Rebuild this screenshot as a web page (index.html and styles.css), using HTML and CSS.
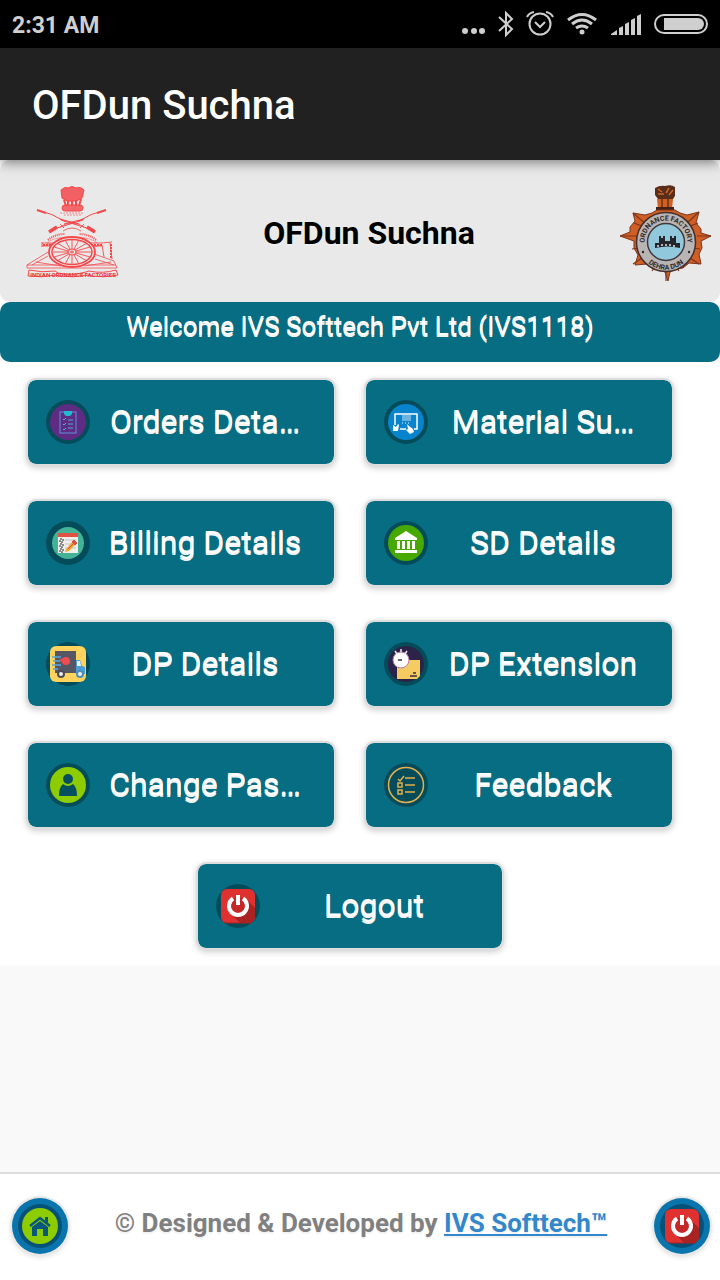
FILE: index.html
```html
<!DOCTYPE html>
<html lang="en">
<head>
    <meta charset="utf-8">
    <meta name="viewport" content="width=device-width, initial-scale=1">
    <title>OFDun Suchna</title>
    <link rel="stylesheet" href="styles.css">
</head>
<body>
    <!-- shared icons -->
    <svg class="defs" width="0" height="0" aria-hidden="true">
        <symbol id="power" viewBox="0 0 44 44">
            <rect x="5" y="5" width="34" height="34" rx="6" fill="#e03131"/>
            <path d="M29 14L39 24V33a6 6 0 0 1-6 6H24L15 30Z" fill="#a92323"/>
            <path d="M8 39h27" stroke="#a92323" stroke-width="1"/>
            <circle cx="22" cy="22" r="9" fill="#c52828"/>
            <path d="M17 14.500a9 9 0 1 0 10 0" fill="none" stroke="#fff" stroke-width="4"/>
            <path d="M22 11v10" stroke="#fff" stroke-width="4"/>
        </symbol>
    </svg>

    <div class="status-bar">
        <span>2:31 AM</span>
        <div class="status-icons">
            <svg width="24" height="48" viewBox="0 0 24 48" fill="#cfcfcf"><circle cx="3" cy="31" r="3"/><circle cx="12" cy="31" r="3"/><circle cx="20" cy="31" r="3"/></svg>
            <svg width="16" height="48" viewBox="0 0 16 48" fill="none" stroke="#cfcfcf" stroke-width="2"><path d="M1 17l13 12-6 6V13l6 6L1 31"/></svg>
            <svg width="28" height="48" viewBox="0 0 28 48" fill="none" stroke="#cfcfcf" stroke-width="2"><circle cx="14" cy="24" r="10.500"/><path d="M9 22l5 5 5-5"/><path d="M1 17q2-4 7-5M27 17q-2-4-7-5"/></svg>
            <svg width="32" height="48" viewBox="0 0 32 48" fill="none" stroke="#cfcfcf" stroke-width="3"><path d="M2 20q14-11 28 0M6 24q10-8 20 0M10 28q6-4 12 0"/><circle cx="16" cy="32" r="2.500" fill="#cfcfcf" stroke="none"/></svg>
            <svg width="32" height="48" viewBox="0 0 32 48" fill="#cfcfcf"><path d="M1 35v-1l6-4v5zM9 35v-7l4-2v9zM15 35v-11l4-2v13zM21 35v-15l4-2v17zM27 35V16l4-2v21z"/></svg>
            <svg width="54" height="48" viewBox="0 0 54 48"><rect x="1" y="15" width="52" height="18" rx="9" fill="none" stroke="#cfcfcf" stroke-width="2"/><path d="M10 18h34a6 6 0 0 1 0 12H10z" fill="#cfcfcf"/></svg>
        </div>
    </div>

    <div class="app-bar">OFDun Suchna</div>

    <header>
        <svg class="logo" viewBox="0 0 96 96" fill="none" stroke="#f5484b" role="img" aria-label="Indian Ordnance Factories">
            <path d="M37 5q4-4 7-2 4-3 8 0 5-2 8 2l-2 8q-5 4-10 3-6 1-10-3z" fill="#f5484b" fill-opacity=".85"/>
            <path d="M40 15l2 6M44 15v6M48 16v5M52 15v6M57 14l-2 7" stroke-width="2"/>
            <rect x="38" y="20" width="21" height="6" rx="3" fill="#f5484b" fill-opacity=".8"/>
            <path d="M36 28h24M40 30h17" stroke-width=".6" stroke-dasharray="2 1"/>
            <path d="M13 25q15 3 29 12M82 25q-15 3-29 12" stroke-width="1"/>
            <path d="M13 25l9 3M82 25l-9 3" stroke-width="2"/>
            <path d="M37 35l26 8M59 35l-26 8M40 39l20-5M36 34l19 5" stroke-width="1"/>
            <path d="M33 42l-8 5M63 42l8 5" stroke-width="3.500"/>
            <path d="M36 42q12-8 24 0M39 46q9-6 18 0M36 39l4 4M60 39l-4 4" stroke-width=".8"/>
            <path d="M24 55q7-6 17-6M72 55q-7-6-17-6" stroke-width="2" stroke-dasharray="1 1"/>
            <path d="M23 58q5-5 19-6M73 58q-5-5-19-6" stroke-width=".5"/>
            <path d="M18 58h60l10-1M18 61h60M18 57v5M86 58l2 16M23 59l50 2M78 60l2 12" stroke-width=".9"/>
            <path d="M19 60h17M61 60h17M87 59v14" stroke-width="2" stroke-dasharray="2 1"/>
            <ellipse cx="48" cy="67" rx="23" ry="15" fill="#e9e9e9" stroke-width="1.800"/>
            <ellipse cx="48" cy="67" rx="20" ry="12.500" stroke-width="1.500"/>
            <ellipse cx="48" cy="67" rx="4" ry="3"/>
            <ellipse cx="48" cy="67" rx="1.500" ry="1"/>
            <path d="M52 67h15M44 67H29M48 64V55M48 70v9M51 65l12-7M45 65l-12-7M51 69l12 7M45 69l-12 7M50 64l5-9M46 64l-5-9M50 70l5 9M46 70l-5 9M52 66l14-4M44 66l-14-4M52 68l14 4M44 68l-14 4" stroke-width=".9"/>
            <path d="M24 67L3 80v3h90l-3-7-20-7M3 80h30M64 80h28M24 71L8 80M71 74l19 6M12 77l25 4M60 81l27-4" stroke-width=".8"/>
            <path d="M5 85q13 3 26 1l3 2q14 3 28-1l3-1q14 3 27-1l2 5q-14 3-28 1l-3-1q-14 3-28 1l-3-1q-14 3-28 1z" stroke-width="1"/>
            <text class="ribbon" x="49" y="92" text-anchor="middle" stroke="none" fill="#e8383c">INDIAN ORDNANCE FACTORIES</text>
        </svg>
        <h1>OFDun Suchna</h1>
        <svg class="logo" viewBox="0 0 96 96" role="img" aria-label="Ordnance Factory Dehra Dun">
            <path d="M37 3q5-3 10-2 6-2 10 1v9l-2 3H40l-3-4z" fill="#5a2d1a"/>
            <path d="M40 4l4 3M51 3l-3 5M55 5l-4 5M40 9h6" stroke="#c9652d" stroke-width="1.500"/>
            <path d="M39 14h16l-1 10H40z" fill="#d2601f"/>
            <path d="M44 14v8M50 14v8" stroke="#69301a" stroke-width="1.500"/>
            <path d="M38 22h18v6H38z" fill="#452015"/>
            <path d="M15 28l12 2 7-2 5-3h18l5 3 7 2 12-3-3 11 5 6v4l10 3-10 5 1 7-3 6 2 10-12-1-6 5-8 1-5 3-2 9-3-9-6-3-7-1-5-4-12 1 3-10-4-7v-7L2 51l10-4v-5l5-6z" fill="#cf5f25" stroke="#7c351c" stroke-width="1"/>
            <path d="M15 28l14 12M81 27L68 39M2 51h16M93 51H79M15 79l12-8M81 79L69 71M48 97V86M16 38l10 4M80 38l-10 4M14 64l8-1M82 64l-7-1M34 86l4-6M61 86l-4-6" stroke="#7c351c" stroke-width="1.200"/>
            <circle cx="48" cy="57" r="29.500" fill="#b9b5b4" stroke="#45302d" stroke-width="1.500"/>
            <circle cx="48" cy="57" r="18.500" fill="#91c8dc" stroke="#41383b" stroke-width="1.500"/>
            <path id="ringTop" d="M28 64.500a21.400 21.400 0 1 1 40 0" fill="none"/>
            <path id="ringBottom" d="M22 65a27 27 0 0 0 52 0" fill="none"/>
            <text class="ring" text-anchor="middle"><textPath href="#ringTop" startOffset="50%">ORDNANCE FACTORY</textPath></text>
            <text class="ring" text-anchor="middle"><textPath href="#ringBottom" startOffset="50%">DEHRA DUN</textPath></text>
            <circle cx="25" cy="67" r="1.200" fill="#2e2829"/><circle cx="71" cy="67" r="1.200" fill="#2e2829"/>
            <path d="M37 63v-5h4v-7h2v2h2v-2h2v5h5v-5h2v2h2v-2h2v7h4v5q-12-3-25 0z" fill="#25262b"/>
            <path d="M40 60v2M44 59v2M48 59v2M52 59v2M56 60v2" stroke="#d8e4e8" stroke-width="1.500"/>
        </svg>
    </header>

    <div class="welcome">Welcome IVS Softtech Pvt Ltd (IVS1118)</div>

    <main>
        <div class="menu">
            <button class="tile">
                <svg class="icon" viewBox="0 0 44 44" aria-hidden="true"><circle cx="22" cy="22" r="18" fill="#5f2c84"/><rect x="14" y="12" width="16" height="21" fill="none" stroke="#5b91d8"/><path d="M18 11h8v3l-2 2h-4l-2-2z" fill="#22bad0"/><path d="M17 19l1 1 2-2M17 24l1 1 2-2M17 29l1 1 2-2M22 20h5M22 24h5M22 28h5" fill="none" stroke="#4bafe0"/></svg>
                <span>Orders Deta…</span>
            </button>
            <button class="tile">
                <svg class="icon" viewBox="0 0 44 44" aria-hidden="true"><circle cx="22" cy="22" r="18" fill="#0784cc"/><path d="M11 25V14h22v15h-3M16 29h6" fill="none" stroke="#fff" stroke-width="1.500"/><path d="M18 16h9M18 18h9M18 20h9" stroke="#fff" stroke-width=".8"/><path d="M18 23h8" stroke="#fff" stroke-dasharray="1 2"/><path d="M9 25l3 2 2-3 1 1-1 6h-5zM23 24l2 2 4 3 1 3-4 2-4-4 2-1z" fill="#fff"/></svg>
                <span>Material Su…</span>
            </button>
            <button class="tile">
                <svg class="icon" viewBox="0 0 44 44" aria-hidden="true"><circle cx="22" cy="22" r="16" fill="#43b296"/><rect x="12" y="13" width="20" height="19" fill="#f1edeb"/><rect x="12" y="12" width="20" height="4" fill="#df5140"/><path d="M19 19h11M19 23h11M19 27h11" stroke="#c7c7c7"/><path d="M14 18h3v3h-3zM14 23h3v3h-3zM14 28h3v3h-3z" fill="#fff" stroke="#222" stroke-dasharray="2 1"/><path d="M20 28l7-8 3 3-7 7-4 1z" fill="#f0aa34"/><path d="M26 21l2-2 3 3-2 2zM22 28l6-6" fill="#df5140" stroke="#df5140"/></svg>
                <span>Billing Details</span>
            </button>
            <button class="tile">
                <svg class="icon" viewBox="0 0 44 44" aria-hidden="true"><circle cx="22" cy="22" r="18" fill="#46a800"/><path d="M11 17l11-7 11 7v2H11zM13 20h3v8h-3zM18 20h3v8h-3zM23 20h3v8h-3zM28 20h3v8h-3zM11 29h22v3H11z" fill="#fff"/></svg>
                <span>SD Details</span>
            </button>
            <button class="tile">
                <svg class="icon boxed" viewBox="0 0 44 44" aria-hidden="true"><rect x="4" y="4" width="36" height="36" rx="6" fill="#ffd35c"/><path d="M9 9h21v22H9z" fill="#565764"/><path d="M30 18h4l2 6 3 1v7h-9z" fill="#4c9ed5"/><path d="M31 19h3l1 5h-4z" fill="#e9f6fb"/><circle cx="20" cy="19" r="4" fill="#ee4c50"/><path d="M17 16l-4 2 4 3z" fill="#ee4c50"/><path d="M6 15h9M7 19h7M6 23h9M7 27h5" stroke="#57a9df" stroke-width="1.500"/><circle cx="15" cy="32" r="3" fill="#eee" stroke="#4a4b58" stroke-width="2"/><circle cx="34" cy="32" r="3" fill="#eee" stroke="#4a8fbd" stroke-width="2"/></svg>
                <span>DP Details</span>
            </button>
            <button class="tile">
                <svg class="icon" viewBox="0 0 44 44" aria-hidden="true"><circle cx="22" cy="22" r="18" fill="#2b2448"/><path d="M13 18h23v16l-3 3H13z" fill="#f4cc61"/><circle cx="17" cy="18" r="8" fill="#fff" stroke="#b67aa8"/><path d="M17 7v3M11 9l2 3M23 9l-2 3" stroke="#eee" stroke-width="1.500"/><path d="M14 18h4M29 31h3M26 34h7" stroke="#383038" stroke-width="1.500"/></svg>
                <span>DP Extension</span>
            </button>
            <button class="tile">
                <svg class="icon" viewBox="0 0 44 44" aria-hidden="true"><circle cx="22" cy="22" r="18" fill="#8dcc00"/><circle cx="22" cy="16" r="5" fill="#064f61"/><path d="M17 21q5 4 10 0 4 3 4 12H13q0-9 4-12z" fill="#064f61"/></svg>
                <span>Change Pas…</span>
            </button>
            <button class="tile">
                <svg class="icon" viewBox="0 0 44 44" aria-hidden="true"><circle cx="22" cy="22" r="17.500" fill="none" stroke="#e4b04d" stroke-width="1.500"/><path d="M14 16l2 2 4-5M21 15h10M14 20h4v4h-4zM21 22h10M14 27h4v4h-4zM21 29h10" fill="none" stroke="#e4b04d" stroke-width="1.500"/></svg>
                <span>Feedback</span>
            </button>
        </div>
        <button class="tile logout">
            <svg class="icon" aria-hidden="true"><use href="#power"/></svg>
            <span>Logout</span>
        </button>
    </main>

    <footer>
        <button class="round" aria-label="Home">
            <svg class="icon" viewBox="0 0 44 44" aria-hidden="true"><circle cx="22" cy="22" r="18" fill="#8dcc00"/><path d="M12 22l10-8 10 8" fill="none" stroke="#06577a" stroke-width="2.500"/><path d="M14 23l8-6 8 6v9h-5v-7h-6v7h-5zM27 13h3v6l-3-2z" fill="#06577a"/></svg>
        </button>
        <p>© Designed &amp; Developed by <a href="#">IVS Softtech™</a></p>
        <button class="round" aria-label="Logout">
            <svg class="icon" aria-hidden="true"><use href="#power"/></svg>
        </button>
    </footer>
</body>
</html>
```
FILE: styles.css
```css
* {
    box-sizing: border-box;
}
body {
    margin: 0;
    min-height: 100vh;
    display: flex;
    flex-direction: column;
    font-family: Roboto, sans-serif;
    background: #f9f9f9;
}
.defs {
    position: absolute;
}
.status-bar {
    display: flex;
    justify-content: space-between;
    align-items: center;
    height: 48px;
    padding: 0 12px;
    background: #000;
    color: #cfcfcf;
    font-size: 23px;
    font-weight: 700;
}
.status-bar span {
    padding-top: 2px;
}
.status-icons {
    display: flex;
    gap: 12px;
}
.app-bar {
    position: relative;
    padding: 34px 32px 30px;
    background: #212121;
    color: #fff;
    font-size: 40px;
    line-height: 48px;
    font-weight: 500;
    box-shadow: 0 2px 12px rgba(0,0,0,0.5);
}
header {
    display: flex;
    justify-content: space-between;
    align-items: center;
    height: 142px;
    padding: 4px 6px 0 24px;
    background: #e9e9e9;
    border-radius: 10px;
    box-shadow: 0 0 0 10px #fff;
}
.logo {
    width: 96px;
    height: 96px;
}
.ribbon {
    font-size: 6px;
    font-weight: 700;
}
.ring {
    font-size: 7px;
    font-weight: 700;
    fill: #2e2829;
}
h1 {
    margin: 0;
    font-size: 32px;
    font-weight: 700;
    color: #000;
    text-shadow: 0 2px 0 #eee;
}
.welcome {
    position: relative;
    height: 60px;
    padding-top: 8px;
    background: #076d82;
    border-radius: 10px;
    color: #fff;
    font-size: 26px;
    line-height: 32px;
    text-align: center;
    text-shadow: 0 2px 0 #f3f3f3;
}
main {
    padding: 16px 46px 16px 26px;
    background: #fff;
}
.menu {
    display: grid;
    grid-template-columns: 1fr 1fr;
    gap: 33px 28px;
}
.tile {
    display: flex;
    align-items: center;
    gap: 16px;
    height: 88px;
    padding: 0 30px 0 18px;
    background: #076d82;
    background-clip: padding-box;
    border: 2px solid #ddd;
    border-radius: 10px;
    box-shadow: 0 2px 6px rgba(0,0,0,0.2);
    color: #fff;
    font-family: inherit;
    font-size: 32px;
    line-height: 40px;
    text-shadow: 0 2px 0 #f3f3f3;
    cursor: pointer;
}
.tile span {
    flex: 1;
    padding-bottom: 2px;
    white-space: nowrap;
    text-align: center;
}
.logout {
    width: calc(50% - 16px);
    margin: 33px auto 0;
}
.icon {
    flex: none;
    width: 44px;
    height: 44px;
    border-radius: 50%;
    background: rgba(0,0,0,0.3);
}
/* square artwork sticks out of the round disc */
.boxed {
    overflow: visible;
}
footer {
    display: flex;
    justify-content: space-between;
    align-items: center;
    height: 108px;
    margin-top: auto;
    padding: 0 10px 2px 12px;
    background: #fff;
    border-top: 2px solid #ddd;
}
footer p {
    margin: 0;
    padding-bottom: 6px;
    color: #808080;
    font-size: 26px;
    line-height: 32px;
    font-weight: 700;
    text-shadow: 0 2px 0 #f3f3f3;
}
footer a {
    color: #3388cc;
}
.round {
    width: 56px;
    height: 56px;
    padding: 6px;
    border: none;
    border-radius: 50%;
    background: #0a75ad;
    box-shadow: 0 0 0 2px #e9e9e9, 0 2px 6px rgba(0,0,0,0.2);
    cursor: pointer;
}
```
